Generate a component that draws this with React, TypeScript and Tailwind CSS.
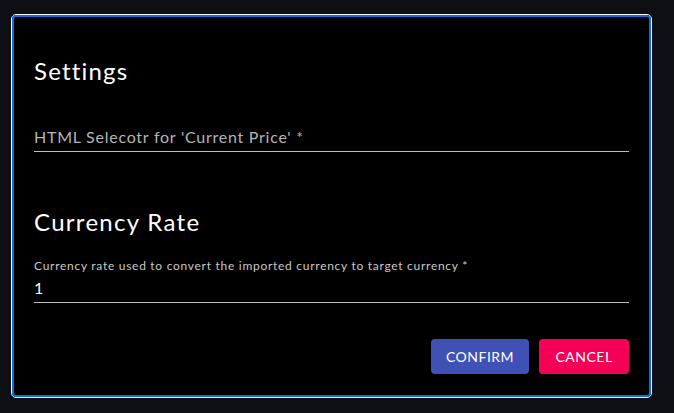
export default function App() {
  return (
    <div className="h-[413px] w-[674px] bg-[#0d0f14] pl-[11px] pt-[14px] font-['Lato',sans-serif]">
      <div className="h-[384px] w-[641px] rounded-[5px] border border-white bg-black">
        <div className="flex h-full flex-col rounded-[4px] border-2 border-[#0b6fe0] px-[20px]">
          <h2 className="mt-[38px] text-[24px] leading-[32px] tracking-[1.2px] text-white">Settings</h2>

          <div className="mt-[38px] border-b border-[#bdbdbd] pb-[2px]">
            <span className="text-[16px] leading-[24px] tracking-[0.75px] text-[#b5b5b5]">
              HTML Selecotr for 'Current Price' *
            </span>
          </div>

          <h2 className="mt-[54px] text-[24px] leading-[32px] tracking-[1.3px] text-white">Currency Rate</h2>

          <div className="mt-[20px] border-b border-[#bdbdbd] pb-[2px]">
            <div className="text-[12px] leading-[16px] tracking-[0.72px] text-[#c8c8c8]">
              Currency rate used to convert the imported currency to target currency *
            </div>
            <div className="mt-[2px] text-[16px] leading-[24px] text-white">1</div>
          </div>

          <div className="mt-[36px] flex justify-end gap-[10px]">
            <button className="h-[35px] w-[98px] rounded-[4px] bg-[#3f51b5] text-[14px] tracking-[0.5px] text-white">
              CONFIRM
            </button>
            <button className="h-[35px] w-[90px] rounded-[4px] bg-[#f50057] text-[14px] tracking-[0.5px] text-white">
              CANCEL
            </button>
          </div>
        </div>
      </div>
    </div>
  );
}
